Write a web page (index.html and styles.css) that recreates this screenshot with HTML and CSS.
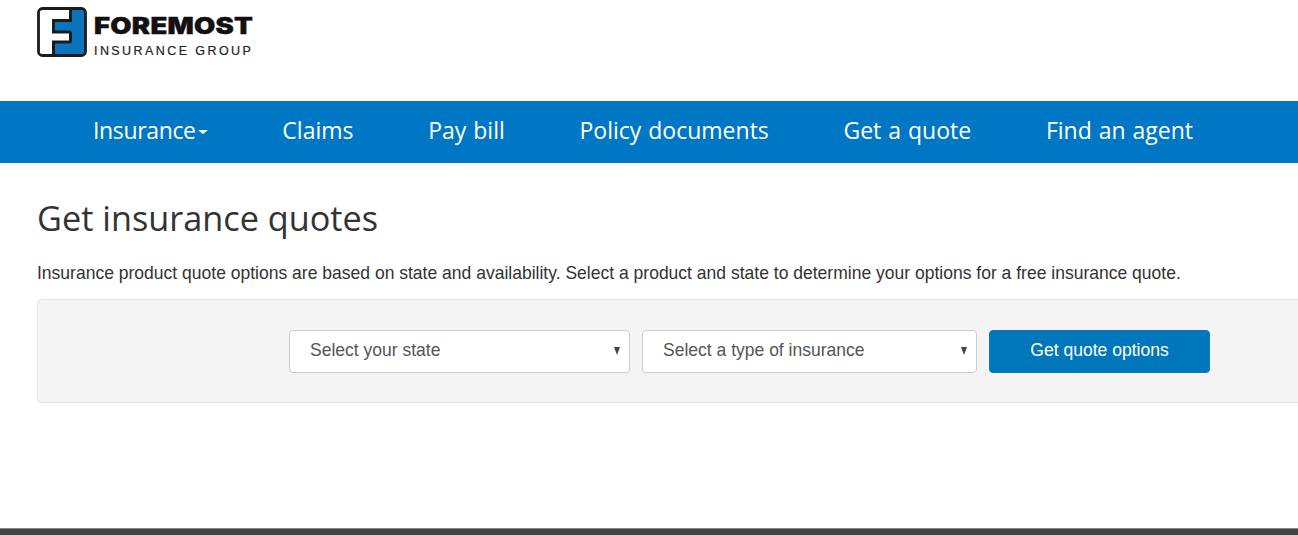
FILE: index.html
```html
<!DOCTYPE html>
<html lang="en">
<head>
<meta charset="utf-8">
<title>Get insurance quotes</title>
<link rel="stylesheet" href="styles.css">
</head>
<body>
<header class="top">
  <a class="logo" href="#">
    <svg class="logo-mark" viewBox="0 0 50 50" width="50" height="50" aria-hidden="true">
      <rect x="1.500" y="1.500" width="47" height="47" rx="4" fill="#fff"/>
      <path d="M33.500 1.500H45a3.500 3.500 0 0 1 3.500 3.500V45a3.500 3.500 0 0 1-3.500 3.500H16.500V35H32a1.500 1.500 0 0 0 1.500-1.500V26.500A1.500 1.500 0 0 0 32 25H16.500V13.500H33.500Z" fill="#0a75bc"/>
      <path d="M33.500 1.500V13.500H16.500V25H32a1.500 1.500 0 0 1 1.500 1.500V33.500a1.500 1.500 0 0 1-1.500 1.500H16.500V48.500" fill="none" stroke="#1c1c1c" stroke-width="3"/>
      <rect x="1.500" y="1.500" width="47" height="47" rx="4" fill="none" stroke="#1c1c1c" stroke-width="2.800"/>
    </svg>
    <span class="logo-words">
      <span class="logo-name">FOREMOST</span>
      <span class="logo-sub">INSURANCE GROUP</span>
    </span>
  </a>
</header>
<nav class="nav">
  <a href="#" class="nav-link nav-link-tight">Insurance<span class="caret"></span></a>
  <a href="#" class="nav-link">Claims</a>
  <a href="#" class="nav-link">Pay bill</a>
  <a href="#" class="nav-link">Policy documents</a>
  <a href="#" class="nav-link">Get a quote</a>
  <a href="#" class="nav-link">Find an agent</a>
</nav>
<main class="main">
  <h1 class="title">Get insurance quotes</h1>
  <p class="intro">Insurance product quote options are based on state and availability. Select a product and state to determine your options for a free insurance quote.</p>
  <form class="panel">
    <div class="select-wrap state">
      <select class="select"><option>Select your state</option></select>
      <span class="arrow"></span>
    </div>
    <div class="select-wrap type">
      <select class="select"><option>Select a type of insurance</option></select>
      <span class="arrow"></span>
    </div>
    <button type="button" class="btn">Get quote options</button>
  </form>
</main>
<footer class="footer"></footer>
</body>
</html>
```
FILE: styles.css
```css
* { box-sizing: border-box; }
html, body { margin: 0; height: 535px; overflow: hidden; }
body {
  width: 1298px;
  background: #fff;
  color: #333;
  font-family: "Liberation Sans", Arial, sans-serif;
  display: flex;
  flex-direction: column;
}
.top { height: 101px; padding: 7px 0 0 37px; flex: none; }
.logo { display: flex; gap: 7px; text-decoration: none; color: #111; width: max-content; }
.logo-mark { display: block; }
.logo-words { display: flex; flex-direction: column; padding-top: 5px; }
.logo-name {
  font-family: Inter, "Liberation Sans", sans-serif;
  font-weight: 900;
  font-size: 22.500px;
  line-height: 28px;
  letter-spacing: 0.2px;
  color: #111;
  -webkit-text-stroke: 0.4px #111;
  transform: scaleX(1.220);
  transform-origin: left center;
}
.logo-sub {
  font-size: 12.500px;
  line-height: 14px;
  letter-spacing: 2.420px;
  color: #222;
  -webkit-text-stroke: 0.2px #222;
  margin-top: 4px;
}
.nav {
  flex: none;
  height: 62px;
  background: #0077c5;
  display: flex;
  align-items: center;
  gap: 74.700px;
  padding: 0 0 4px 93px;
}
.nav-link {
  color: #fff;
  text-decoration: none;
  font-family: "Open Sans", sans-serif;
  font-size: 23px;
  line-height: 30px;
  word-spacing: 1px;
  display: flex;
  align-items: center;
}
.nav-link-tight { letter-spacing: -0.35px; }
.caret {
  width: 0;
  height: 0;
  margin: 3px 0 0 2px;
  border-top: 4px solid #fff;
  border-left: 5px solid transparent;
  border-right: 5px solid transparent;
}
.main { flex: 1; padding: 35px 0 0 37px; }
.title {
  margin: 0;
  font-family: "Open Sans", sans-serif;
  font-weight: 400;
  font-size: 34.250px;
  line-height: 40px;
  color: #333;
}
.intro { margin: 24px 0 0; font-size: 17.520px; line-height: 22px; color: #333; white-space: nowrap; }
.panel {
  margin: 15px 0 0;
  width: 1300px;
  height: 104px;
  background: #f4f4f4;
  border: 1px solid #e6e6e6;
  border-radius: 4px;
  display: flex;
  align-items: flex-start;
  gap: 12px;
  padding: 29.500px 0 0 251px;
}
.select-wrap { position: relative; height: 43px; }
.state { width: 341px; }
.type { width: 335px; }
.select {
  appearance: none;
  -webkit-appearance: none;
  width: 100%;
  height: 100%;
  border: 1px solid #ccc;
  border-radius: 4px;
  background: #fff;
  color: #555;
  font-family: "Liberation Sans", Arial, sans-serif;
  font-size: 17.520px;
  padding: 0 20px 3px;
}
.arrow {
  position: absolute;
  right: 10px;
  top: 17px;
  width: 0;
  height: 0;
  border-top: 8px solid #444;
  border-left: 3.500px solid transparent;
  border-right: 3.500px solid transparent;
  pointer-events: none;
}
.btn {
  width: 221px;
  height: 43px;
  background: #0077bb;
  border: 1px solid #0a78be;
  border-radius: 4px;
  color: #fff;
  font-family: "Liberation Sans", Arial, sans-serif;
  font-size: 17.520px;
  padding: 0 0 1px;
}
.footer { flex: none; height: 7px; background: #444; border-top: 1px solid #8a8a8a; }
```
